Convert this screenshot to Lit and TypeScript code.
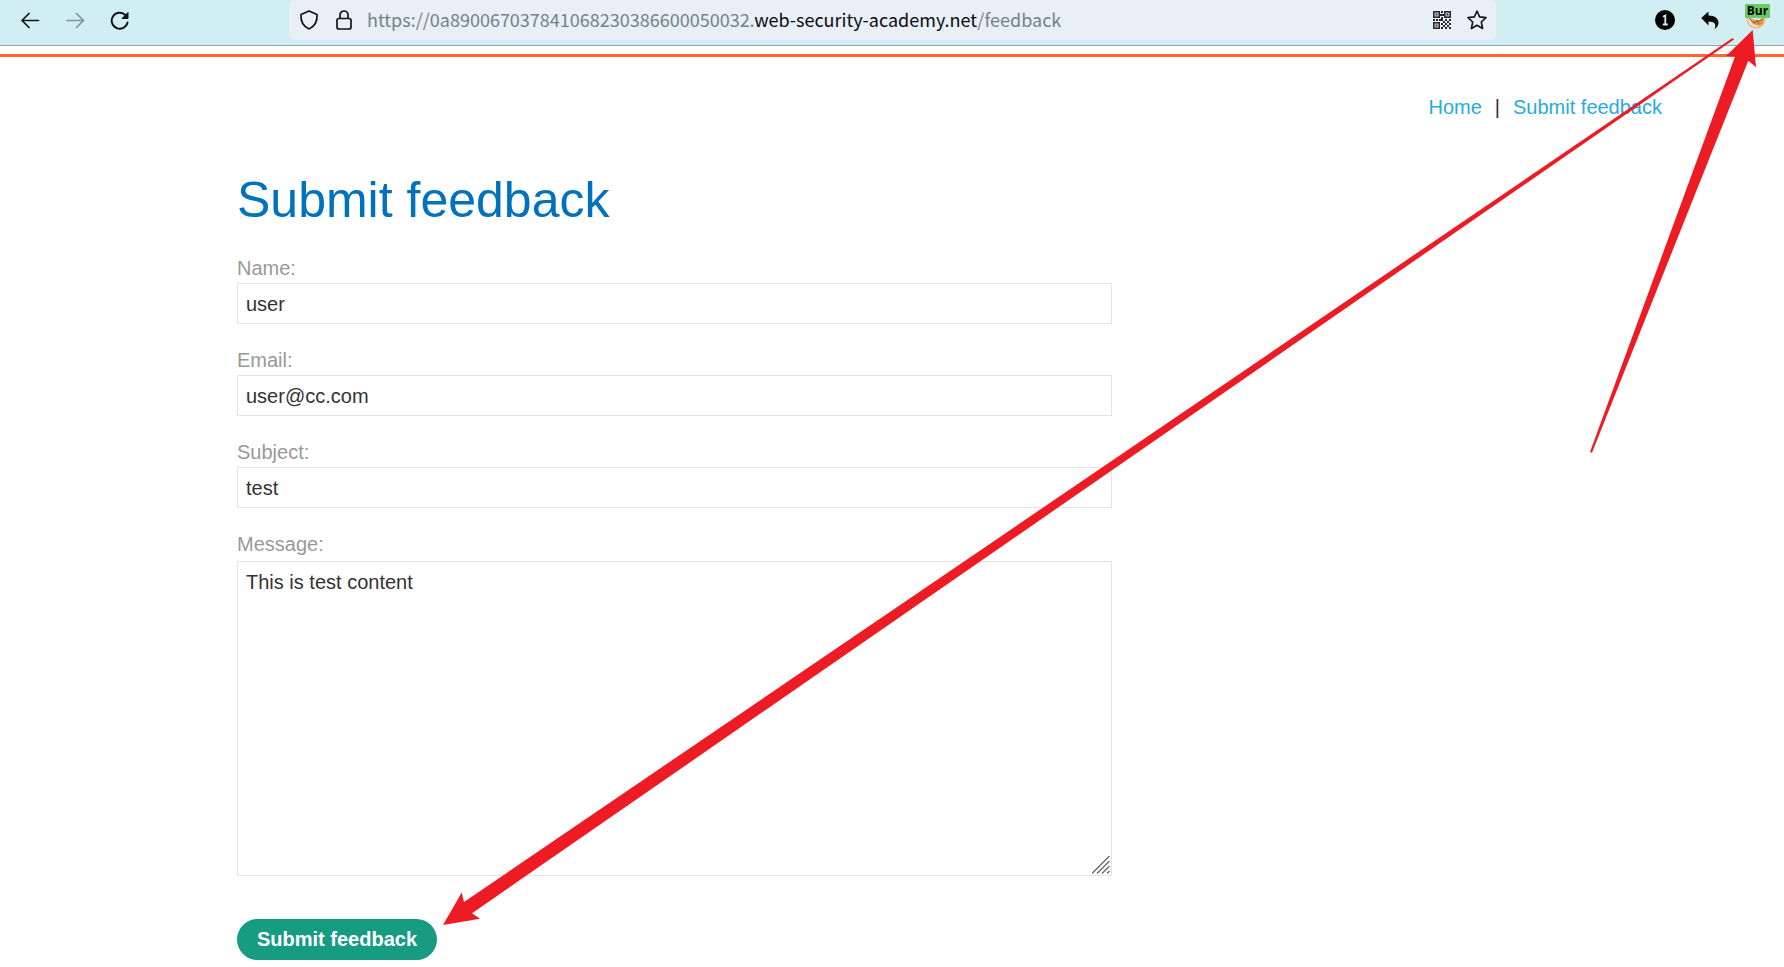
import { LitElement, html, css, svg } from "lit";
import { customElement } from "lit/decorators.js";

const QR_DOTS: [number, number][] = [
  [8, 0], [7, 3], [9, 3], [8, 6],
  [0, 8], [3, 8], [6, 8], [8, 8], [12, 8], [16, 8],
  [10, 10], [14, 10], [8, 12], [12, 12], [16, 12],
  [10, 14], [14, 14], [8, 16], [12, 16], [16, 16],
];

@customElement("browser-toolbar")
export class BrowserToolbar extends LitElement {
  static styles = css`
    :host {
      display: block;
      background: #d1eef2;
      border-bottom: 1px solid #8fa5a8;
    }
    .bar {
      display: grid;
      grid-template-columns: 289px minmax(0, 1fr) 288px;
      height: 45px;
      align-items: start;
    }
    .group {
      display: flex;
      align-items: center;
      height: 40px;
    }
    .nav {
      gap: 25px;
      padding-left: 20px;
    }
    .tools {
      gap: 25px;
      justify-content: flex-end;
      padding-right: 13px;
    }
    .address {
      gap: 14px;
      padding: 0 8px 0 10px;
      background: #e8eff6;
      border-radius: 5px;
    }
    button {
      display: flex;
      flex: none;
      padding: 0;
      border: 0;
      background: none;
      color: #101418;
    }
    button:disabled {
      color: #83979a;
    }
    svg {
      display: block;
    }
    .url {
      flex: 1;
      min-width: 0;
      padding-bottom: 2px;
      overflow: hidden;
      white-space: nowrap;
      font: 18px/24px "Noto Sans CJK SC", sans-serif;
      color: #738387;
    }
    .domain {
      color: #0c0c0d;
    }
    .ext {
      position: relative;
    }
    .badge {
      position: absolute;
      top: -5px;
      left: 0;
      width: 25px;
      height: 14px;
      border-radius: 1px;
      background: #66cc66;
      color: #000;
      font: bold 12px/13px "Open Sans", sans-serif;
      text-align: center;
    }
  `;

  render() {
    return html`
      <div class="bar">
        <div class="group nav">
          <button aria-label="Back">
            <svg width="20" height="20" viewBox="0 0 20 20" fill="none" stroke="currentColor" stroke-width="1.7" stroke-linecap="round" stroke-linejoin="round"><path d="M18.500 10.500H2M9 3.500l-7 7 7 7" /></svg>
          </button>
          <button aria-label="Forward" disabled>
            <svg width="20" height="20" viewBox="0 0 20 20" fill="none" stroke="currentColor" stroke-width="1.7" stroke-linecap="round" stroke-linejoin="round"><path d="M2 10.500h16.500M11.500 3.500l7 7-7 7" /></svg>
          </button>
          <button aria-label="Reload">
            <svg width="20" height="20" viewBox="1 0 20 20"><path d="M18.500 12.500A8 8 0 1 1 16 4.700" fill="none" stroke="currentColor" stroke-width="1.9" stroke-linecap="round" /><path d="M19 2.500v6h-6z" fill="currentColor" stroke="currentColor" stroke-linejoin="round" /></svg>
          </button>
        </div>
        <div class="group address">
          <button aria-label="Tracking protection">
            <svg width="20" height="20" viewBox="0 0 20 20" fill="none" stroke="currentColor" stroke-width="1.700" stroke-linejoin="round"><path d="M10 1l8 3.500c.400 6-1.500 11.500-8 14.500C3.500 16 1.600 10.500 2 4.500z" /></svg>
          </button>
          <button aria-label="Connection secure">
            <svg width="20" height="20" viewBox="-1 0 20 20" fill="none" stroke="currentColor" stroke-width="1.700"><rect x="3" y="8.500" width="14" height="10.500" rx="2" /><path d="M6 8.500V5a4 4 0 0 1 8 0v3.500" /></svg>
          </button>
          <span class="url">https://0a890067037841068230386600050032.<span class="domain">web-security-academy.net</span>/feedback</span>
          <button aria-label="QR code">
            <svg width="20" height="20" viewBox="-1 -1 20 20" fill="#26292c">
              <g fill="none" stroke="#26292c" stroke-width="1.600"><rect x="0.800" y="0.800" width="5.400" height="5.400" /><rect x="11.800" y="0.800" width="5.400" height="5.400" /><rect x="0.800" y="11.800" width="5.400" height="5.400" /></g>
              <rect x="2.500" y="2.500" width="2" height="2" /><rect x="13.500" y="2.500" width="2" height="2" /><rect x="2.500" y="13.500" width="2" height="2" />
              ${QR_DOTS.map(([x, y]) => svg`<rect x=${x} y=${y} width="2" height="2" />`)}
            </svg>
          </button>
          <button aria-label="Bookmark this page">
            <svg width="22" height="22" viewBox="0 0 22 22" fill="none" stroke="currentColor" stroke-width="1.600" stroke-linejoin="round"><path d="M11 2l2.600 5.900 6.400.700-4.700 4.400 1.300 6.500L11 16.300l-5.600 3.200 1.300-6.500L2 8.600l6.400-.7z" /></svg>
          </button>
        </div>
        <div class="group tools">
          <button aria-label="Password manager">
            <svg width="20" height="20" viewBox="0 0 20 20"><circle cx="10" cy="10" r="10" fill="#000" /><path d="M8 6.800L10.300 5.500V15M7.800 14.500h5" fill="none" stroke="#d1eef2" stroke-width="1.800" /></svg>
          </button>
          <button aria-label="Undo">
            <svg width="20" height="20" viewBox="0 0 20 20"><path d="M1.200 8L8.500 1.500v4C15 5.500 18.500 8.500 18.500 13c0 2.500-1.800 4.800-4 6 2-4.500.5-7.500-6-7.500v4z" fill="#0c0c0d" /></svg>
          </button>
          <button class="ext" aria-label="Burp proxy">
            <svg width="26" height="22" viewBox="0 0 26 22"><circle cx="11" cy="10" r="9.500" fill="#f5b676" /><circle cx="11" cy="10" r="8" fill="#dfe2e2" /><path d="M4 9l4 6 6 2 4-2 1-7-6 4z" fill="#f09238" /><path d="M4 9l5 5 9-4M9 14l3-3 2 4" stroke="#8c6b4d" fill="none" /></svg>
            <span class="badge">Bur</span>
          </button>
        </div>
      </div>
    `;
  }
}

@customElement("feedback-form")
export class FeedbackForm extends LitElement {
  static styles = css`
    :host {
      display: block;
    }
    form {
      display: flex;
      flex-direction: column;
      align-items: flex-start;
      gap: 24px;
      max-width: 875px;
    }
    .field {
      display: flex;
      flex-direction: column;
      gap: 2px;
      width: 100%;
    }
    label {
      line-height: 25px;
      color: #999;
    }
    input,
    textarea {
      box-sizing: border-box;
      width: 100%;
      margin: 0;
      border: 1px solid #e4e4e4;
      border-radius: 0;
      background: #fff;
      color: #333332;
      font: inherit;
      outline: none;
    }
    input {
      height: 41px;
      padding: 2px 8px 0;
    }
    textarea {
      display: block;
      height: 315px;
      padding: 9px 8px;
      resize: none;
    }
    .area {
      position: relative;
      padding-top: 2px;
    }
    .grip {
      position: absolute;
      right: 2px;
      bottom: 2px;
    }
    .submit {
      height: 41px;
      margin-top: 19px;
      padding: 0 20px;
      border: 0;
      border-radius: 21px;
      background: #179b81;
      color: #fff;
      font: inherit;
      font-weight: bold;
    }
  `;

  render() {
    return html`
      <form @submit=${(e: Event) => e.preventDefault()}>
        <div class="field">
          <label for="name">Name:</label>
          <input id="name" type="text" value="user" />
        </div>
        <div class="field">
          <label for="email">Email:</label>
          <input id="email" type="email" value="user@cc.com" />
        </div>
        <div class="field">
          <label for="subject">Subject:</label>
          <input id="subject" type="text" value="test" />
        </div>
        <div class="field">
          <label for="message">Message:</label>
          <div class="area">
            <textarea id="message" .value=${"This is test content"}></textarea>
            <svg class="grip" width="18" height="18" viewBox="0 0 18 18" stroke="#6c6c6c" stroke-width="1.400"><path d="M0 17.500L17.500 0M5 17.500L17.500 5M10 17.500L17.500 10M15 17.500l2.500-2.500" /></svg>
          </div>
        </div>
        <button class="submit" type="submit">Submit feedback</button>
      </form>
    `;
  }
}

@customElement("app-root")
export class AppRoot extends LitElement {
  static styles = css`
    :host {
      display: block;
      position: relative;
      overflow: hidden;
      min-height: 100vh;
      background: #fff;
      color: #333332;
      font: 20px/23px "Liberation Sans", Arial, sans-serif;
    }
    .page {
      margin-top: 8px;
      border-top: 3px solid #ff6633;
    }
    .links {
      display: flex;
      justify-content: flex-end;
      gap: 13px;
      max-width: 1540px;
      margin: 0 auto;
      padding-top: 39px;
    }
    .links a {
      color: #29abe2;
      text-decoration: none;
    }
    .content {
      max-width: 1310px;
      margin: 0 auto;
      padding-bottom: 7px;
    }
    h1 {
      margin: 52px 0 27px;
      color: #0071bd;
      font-size: 50px;
      font-weight: normal;
      line-height: 58px;
    }
    .marks {
      position: absolute;
      top: 0;
      left: 0;
      pointer-events: none;
    }
  `;

  render() {
    return html`
      <browser-toolbar></browser-toolbar>
      <div class="page">
        <nav class="links">
          <a href="#home">Home</a>
          <span>|</span>
          <a href="#feedback">Submit feedback</a>
        </nav>
        <main class="content">
          <h1>Submit feedback</h1>
          <feedback-form></feedback-form>
        </main>
      </div>
      <svg class="marks" width="1784" height="967" viewBox="0 0 1784 967" fill="#ed1c24" aria-hidden="true">
        <path d="M443 925L461.700 892.500 464 902 1732.500 38 1734 39.500 472 913.300 480 918.700z" />
        <path d="M1752.700 30L1726 56l9 .5L1590 452l2 .7L1748.300 60.700l7.700 6.500z" />
      </svg>
    `;
  }
}
